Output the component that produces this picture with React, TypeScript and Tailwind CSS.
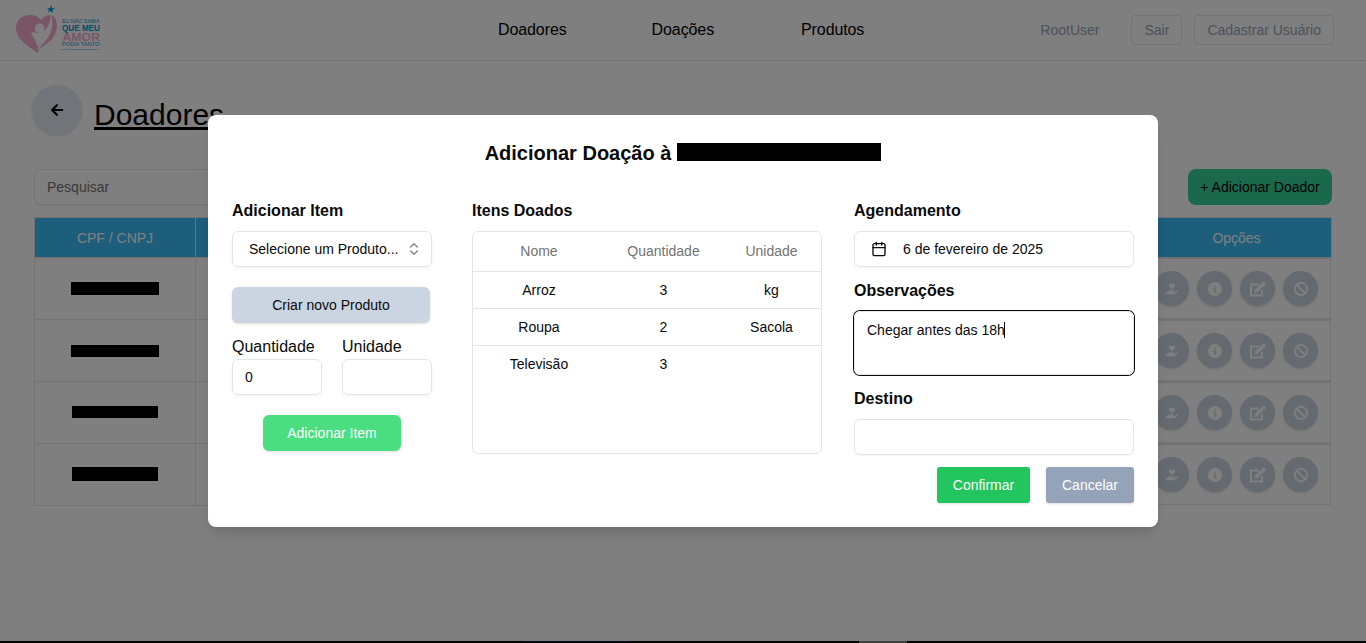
import React from "react";
import { Calendar, ChevronsUpDown } from "lucide-react";
import { FaArrowLeft } from "react-icons/fa";
import { FaBan, FaCircleInfo, FaHandHoldingHeart } from "react-icons/fa6";

const input = "rounded-md border border-[#e5e5e5] shadow-xs";

function Logo() {
  return (
    <svg className="h-[50px] w-[88px]" viewBox="0 0 88 50" aria-hidden="true">
      <path d="M21.5 48C14 42 0 35 0 23C0 15 6 10 13 10C19 10 23 12 25 15C27 11 33 9 37 11C43 15 42 28 35 35C31 39 26 42 24 44Z" fill="#f5a9cf" />
      <path d="M15 28C18 27 21 28 24 28C31 26 34 19 35 9C38.500 20 35 31 28 37.500C25 40.500 23.500 43 21.500 48C22.500 43 23 41 20 39C21 36 17 32 15 28Z" fill="#fff" />
      <circle cx="23.7" cy="23.3" r="4.8" fill="#fff" />
      <path d="M35.500 0L36 3L39 3.500L36.500 5L37 8L34.500 6L32 7.500L33 5L31 3L34 3Z" fill="#0ea5e9" />
      <g fontFamily="Liberation Sans, sans-serif" fill="#1296d0">
        <text x="46" y="17.700" fontSize="5.2" textLength="37.500" lengthAdjust="spacingAndGlyphs">EU NÃO SABIA</text>
        <text x="46" y="25.700" fontSize="8.5" fontWeight="bold" textLength="38" lengthAdjust="spacingAndGlyphs">QUE MEU</text>
        <text x="46.500" y="35.500" fontSize="11" fontWeight="bold" fill="#f5a9cf" textLength="37.500" lengthAdjust="spacingAndGlyphs">AMOR</text>
        <text x="46" y="40.500" fontSize="5.5" textLength="37.500" lengthAdjust="spacingAndGlyphs">PODIA TANTO</text>
        <text x="45" y="45" fontSize="2.5" textLength="39" lengthAdjust="spacingAndGlyphs">INSTITUTO BENEFICENTE SOCIAL</text>
      </g>
    </svg>
  );
}

function EditIcon({ className }: { className?: string }) {
  return (
    <svg className={className} viewBox="0 0 16 16" aria-hidden="true">
      <path d="M9 3.500H1V14.500H12V9" fill="none" stroke="currentColor" strokeWidth="2" />
      <path d="M4.500 11.700L5 8.700L11 2.700L13.500 5.200L7.500 11.200Z" fill="currentColor" />
      <path d="M11.300 2.400L13 .8Q13.600.3 14.200.8L15.500 2.100Q16 2.700 15.500 3.300L13.800 4.900Z" fill="currentColor" />
    </svg>
  );
}

function Header() {
  return (
    <header className="flex h-[61px] items-center border-b border-[#e5e5e5] px-4">
      <div className="flex w-[482px] items-center"><Logo /></div>
      <nav className="flex w-[367px] gap-[85px] tracking-[-0.1px]">
        <a>Doadores</a>
        <a>Doações</a>
        <a className="ml-0.5">Produtos</a>
      </nav>
      <div className="flex flex-1 items-center justify-end gap-3 pr-4 text-sm text-[#94a3b8]">
        <span className="mr-5">RootUser</span>
        <button className="h-[30px] rounded border border-[#e5e5e5] px-3">Sair</button>
        <button className="h-[30px] rounded border border-[#e5e5e5] px-3">Cadastrar Usuário</button>
      </div>
    </header>
  );
}

const documents = ["h-[13px] w-[88px]", "h-3 w-[88px]", "mb-0.5 h-3 w-[86px]", "mb-0.5 h-[14px] w-[86px]"];
const actions = [
  { Icon: FaHandHoldingHeart, size: "size-3" },
  { Icon: FaCircleInfo, size: "size-3.5" },
  { Icon: EditIcon, size: "size-4" },
  { Icon: FaBan, size: "size-3.5" },
];

function Donors() {
  return (
    <main className="px-8 pt-6">
      <div className="flex items-start gap-3">
        <button className="flex size-[50px] items-center justify-center rounded-full bg-[#e2e8f0] shadow-sm">
          <FaArrowLeft className="size-3.5" />
        </button>
        <h1 className="mt-3 text-3xl leading-9 underline">Doadores</h1>
      </div>
      <div className="mt-[34px] flex h-9 justify-between px-0.5">
        <div className={`flex w-96 items-center px-3 text-sm text-[#737373] ${input}`}>Pesquisar</div>
        <button className="w-36 rounded-lg bg-[#34d399] text-sm">+ Adicionar Doador</button>
      </div>
      <table className="ml-0.5 mt-3 w-[1298px] table-fixed border-collapse text-center text-sm">
        <thead>
          <tr className="h-10 bg-[#38bdf8] text-white">
            <th className="w-[161px] border border-[#e5e5e5] font-normal">CPF / CNPJ</th>
            <th className="border border-[#e5e5e5]" />
            <th className="w-[190px] border border-[#e5e5e5] font-normal">Opções</th>
          </tr>
        </thead>
        <tbody>
          {documents.map((size, row) => (
            <tr key={row} className="h-[62px]">
              <td className="border border-[#e5e5e5]">
                <div className={`mx-auto bg-black ${size}`} />
              </td>
              <td className="border border-[#e5e5e5]" />
              <td className="border-t border-[#e5e5e5] p-0">
                <div className="mr-px flex h-[61px] items-center justify-center gap-2 border-y border-r border-[#e5e5e5] pl-px">
                  {actions.map(({ Icon, size }, i) => (
                    <button key={i} className="flex size-[35px] items-center justify-center rounded-full bg-[#cbd5e1] text-white shadow-sm">
                      <Icon className={size} />
                    </button>
                  ))}
                </div>
              </td>
            </tr>
          ))}
        </tbody>
      </table>
    </main>
  );
}

const items = [
  ["Arroz", "3", "kg"],
  ["Roupa", "2", "Sacola"],
  ["Televisão", "3", ""],
];

function DonationDialog() {
  return (
    <section className="h-[412px] w-[950px] rounded-lg bg-white px-6 pt-6 text-[#0a0a0a] shadow-lg">
      <h2 className="flex h-7 items-center justify-center text-xl font-semibold">
        Adicionar Doação à
        <span className="mb-0.5 ml-1.5 h-[18px] w-[204px] bg-black" />
      </h2>
      <div className="mt-8 flex">
        <div className="w-[200px]">
          <h3 className="font-semibold">Adicionar Item</h3>
          <button className={`mt-2 flex h-9 w-full items-center justify-between pl-4 pr-[9px] text-sm ${input}`}>
            Selecione um Produto...
            <ChevronsUpDown className="size-4 opacity-50" />
          </button>
          <button className="mt-5 h-9 w-[198px] rounded-md bg-[#cbd5e1] text-sm shadow-sm">Criar novo Produto</button>
          <div className="mt-3 flex gap-5">
            <label className="w-[90px]">
              Quantidade
              <span className={`flex h-9 items-center px-3 text-sm ${input}`}>0</span>
            </label>
            <label className="w-[90px]">
              Unidade
              <span className={`flex h-9 ${input}`} />
            </label>
          </div>
          <button className="mx-auto mt-5 block h-9 w-[138px] rounded-md bg-[#4ade80] text-sm text-white shadow-sm">Adicionar Item</button>
        </div>
        <div className="ml-10 w-[350px]">
          <h3 className="font-semibold">Itens Doados</h3>
          <div className="mt-2 h-[223px] rounded-md border border-[#e5e5e5]">
            <table className="w-full table-fixed text-center text-sm">
              <thead>
                <tr className="h-[39px] border-b border-[#e5e5e5] text-[#737373]">
                  <th className="w-[132px] font-normal">Nome</th>
                  <th className="w-[117px] font-normal">Quantidade</th>
                  <th className="font-normal">Unidade</th>
                </tr>
              </thead>
              <tbody>
                {items.map((item) => (
                  <tr key={item[0]} className="h-[37px] border-b border-[#e5e5e5] last:border-0">
                    {item.map((value, i) => <td key={i}>{value}</td>)}
                  </tr>
                ))}
              </tbody>
            </table>
          </div>
        </div>
        <div className="ml-8 w-[280px]">
          <h3 className="font-semibold">Agendamento</h3>
          <button className={`mt-2 flex h-9 w-full items-center gap-4 px-4 text-sm ${input}`}>
            <Calendar className="size-4" />
            6 de fevereiro de 2025
          </button>
          <h3 className="mt-3 font-semibold">Observações</h3>
          <div className="mt-2 flex h-16 items-start rounded-md border border-[#e5e5e5] px-3 py-2 text-sm ring-1 ring-[#0a0a0a]">
            Chegar antes das 18h
            <span className="-ml-px mt-0.5 h-4 w-px bg-black" />
          </div>
          <h3 className="mt-3 font-semibold">Destino</h3>
          <div className={`mt-2 h-9 ${input}`} />
          <div className="mt-3 flex justify-end gap-4 text-sm text-white">
            <button className="h-9 w-[93px] rounded-[3px] bg-[#22c55e] shadow-sm">Confirmar</button>
            <button className="h-9 w-[88px] rounded-[3px] bg-[#94a3b8] shadow-sm">Cancelar</button>
          </div>
        </div>
      </div>
    </section>
  );
}

export default function App() {
  return (
    <div className="relative h-[643px] overflow-hidden bg-white font-['Liberation_Sans',Arial,sans-serif] text-black">
      <Header />
      <Donors />
      <div className="absolute inset-0 flex items-start justify-center bg-black/50 pt-[115px]">
        <DonationDialog />
      </div>
      <div className="absolute inset-x-0 bottom-0 flex h-0.5 bg-black">
        <span className="ml-[523px] w-[105px] bg-[#050510]" />
        <span className="ml-[231px] w-12 bg-[#404040]" />
      </div>
    </div>
  );
}
